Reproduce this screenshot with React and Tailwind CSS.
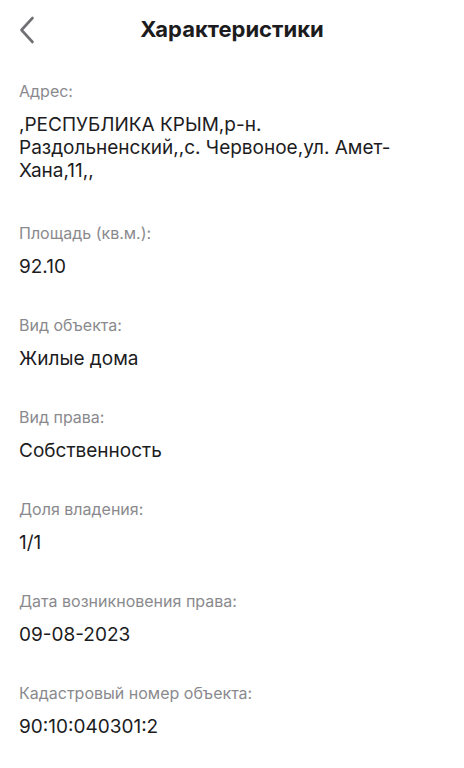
const items = [
  { label: 'Площадь (кв.м.):', value: '92.10' },
  { label: 'Вид объекта:', value: 'Жилые дома' },
  { label: 'Вид права:', value: 'Собственность' },
  { label: 'Доля владения:', value: '1/1' },
  { label: 'Дата возникновения права:', value: '09-08-2023' },
  { label: 'Кадастровый номер объекта:', value: '90:10:040301:2' },
]

function BackIcon() {
  return (
    <svg width="16" height="28" viewBox="0 0 16 28" fill="none" className="absolute left-[19px] top-[16px]">
      <polyline points="13.5,2 2.5,14 13.5,26" stroke="#707074" strokeWidth="2.6" strokeLinecap="round" strokeLinejoin="round" />
    </svg>
  )
}

function Field({ label, children, className = '' }) {
  return (
    <div className={`flex flex-col ${className}`}>
      <p className="text-[16px] leading-[20px] text-[#8a8a8e]">{label}</p>
      <div className="mt-[12px] text-[19px] leading-[23px] text-[#1c1c1e]">{children}</div>
    </div>
  )
}

export default function App() {
  return (
    <div className="h-[768px] w-[464px] overflow-hidden bg-white" style={{ fontFamily: 'Inter, "Noto Sans", sans-serif' }}>
      <header className="relative flex h-[58px] items-center justify-center">
        <BackIcon />
        <h1 className="text-[22px] font-bold text-[#1c1c1e]">Характеристики</h1>
      </header>
      <main className="flex flex-col px-[19px] pt-[23px]">
        <Field label="Адрес:" className="pb-[41px]">
          ,РЕСПУБЛИКА КРЫМ,р-н.<br />
          Раздольненский,,с. Червоное,ул. Амет-<br />
          Хана,11,,
        </Field>
        {items.map(item => (
          <Field key={item.label} label={item.label} className="pb-[37px]">{item.value}</Field>
        ))}
      </main>
    </div>
  )
}
